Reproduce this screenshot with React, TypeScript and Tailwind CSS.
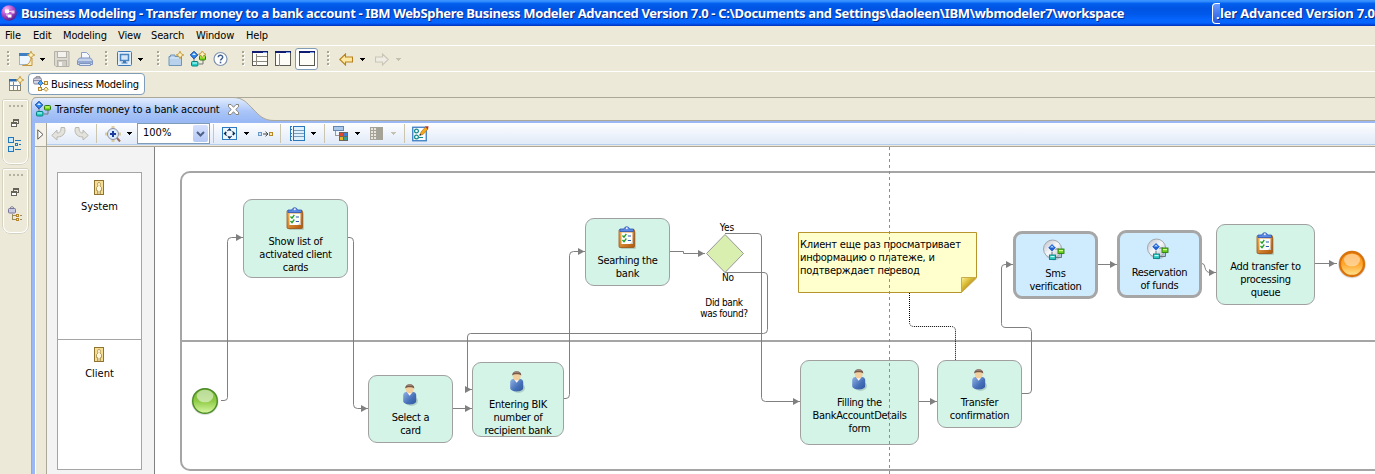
import React from "react";

type P = { className?: string };

const Svg = ({ w = 16, h = 16, className = "", children }: { w?: number; h?: number; className?: string; children: React.ReactNode }) => (
  <svg width={w} height={h} viewBox={`0 0 ${w} ${h}`} fill="none" className={`shrink-0 ${className}`}>
    {children}
  </svg>
);

/* ---------- small glyphs ---------- */

const Sparkle = ({ x = 12, y = 4 }: { x?: number; y?: number }) => (
  <g transform={`translate(${x} ${y})`}>
    <path d="M0-3.800 L1.200-1.200 L3.800 0 L1.200 1.200 L0 3.800 L-1.200 1.200 L-3.800 0 L-1.200-1.200Z" fill="#fdf3c0" stroke="#c4963a" strokeWidth=".9" />
  </g>
);

const Down = ({ className = "", dim = false }: P & { dim?: boolean }) => (
  <Svg w={5} h={3} className={className}>
    <path d="M0 0H5V1H4V2H3V3H2V2H1V1H0Z" fill={dim ? "#c4c1b0" : "#000"} shapeRendering="crispEdges" />
  </Svg>
);

const Grip = ({ className = "" }: P) => (
  <Svg w={3} h={16} className={className}>
    {[0, 4, 8, 12].map((y) => (
      <g key={y} shapeRendering="crispEdges">
        <rect x="1" y={y + 1} width="2" height="2" fill="#fff" />
        <rect x="0" y={y} width="2" height="2" fill="#a9a592" />
      </g>
    ))}
  </Svg>
);

const IconNew = ({ className = "" }: P) => (
  <Svg className={className}>
    <rect x="0.5" y="2.500" width="12" height="11" fill="#eef6ff" stroke="#9fb6cc" />
    <path d="M0 2h10v3H0z" fill="#3f7fc4" />
    <path d="M13 7v7.500H3.500C9 14.500 10.500 12 11.500 9z" fill="#fdeebb" stroke="#c4963a" />
    <Sparkle x={12} y={4} />
  </Svg>
);

const IconSave = ({ className = "" }: P) => (
  <Svg className={className}>
    <path d="M1 .5h14v15H2L.5 14V.5z" fill="#dcdad0" stroke="#b3b1a8" />
    <rect x="3.500" y=".5" width="9" height="6" fill="#f3f2ee" stroke="#b3b1a8" />
    <rect x="3.500" y="9.500" width="9" height="6" fill="#cfcdc5" stroke="#b3b1a8" />
    <rect x="5" y="11" width="3" height="4" fill="#f3f2ee" />
  </Svg>
);

const IconPrint = ({ className = "" }: P) => (
  <Svg className={className}>
    <path d="M4.500 8V1.500h5l3 3V8" fill="#f4f8ff" stroke="#8a9fc4" />
    <path d="M.5 9.500l2-2.500h11l2 2.500v4h-15z" fill="#c3d1ea" stroke="#7f95c0" />
    <path d="M1 10h14v2H1z" fill="#93a9d1" />
    <path d="M2.500 12.500h11v2h-11z" fill="#dce6f6" stroke="#7f95c0" />
  </Svg>
);

const IconMonitor = ({ className = "" }: P) => (
  <Svg className={className}>
    <rect x=".5" y=".5" width="14" height="14" rx="1" fill="#e3effb" stroke="#3d78b8" />
    <rect x="3.500" y="3.500" width="8" height="6" fill="#d4e6f8" stroke="#4a83bd" strokeWidth="1.500" />
    <path d="M6 10h3v1.500h1.500v1h-6v-1H6z" fill="#3d78b8" />
  </Svg>
);

const IconFolderNew = ({ className = "" }: P) => (
  <Svg className={className}>
    <path d="M1 14.500V5.500H2.500V4h4.500v1.500h6.500v9z" fill="#b9d2ec" stroke="#6f94b8" />
    <path d="M2 7h11" stroke="#dcebf9" />
    <Sparkle x={12} y={4} />
  </Svg>
);

const IconProcess = ({ className = "", star = false }: P & { star?: boolean }) => (
  <Svg className={className}>
    <path d="M4 6v5M9 13h4V8" stroke="#777" />
    <path d="M4 .3L7.700 4 4 7.700.3 4z" fill="#2f8df2" stroke="#123c9a" />
    <path d="M4 2l2 2H2z" fill="#d7efff" />
    <rect x="9.500" y="4.500" width="6" height="4.500" rx="1" fill="#7ddd1c" stroke="#2e7d0c" />
    <rect x="10.500" y="5.500" width="4" height="1" fill="#dcff90" />
    <rect x="1.500" y="10.500" width="6.500" height="4.500" rx="1" fill="#25cfc7" stroke="#08807c" />
    <rect x="2.500" y="11.500" width="4.500" height="1" fill="#c7fffb" />
    {star && <Sparkle x={12.300} y={3.300} />}
  </Svg>
);

const IconHelp = ({ className = "" }: P) => (
  <Svg className={className}>
    <circle cx="7.500" cy="8" r="6.500" fill="#fff" stroke="#7f93b0" strokeWidth="1.200" />
    <path d="M5.300 6.300C5.300 3.600 9.700 3.600 9.700 6.200C9.700 7.800 7.500 7.800 7.500 9.600" stroke="#3f5f90" strokeWidth="1.500" />
    <rect x="6.700" y="10.700" width="1.600" height="1.600" fill="#3f5f90" />
  </Svg>
);

const IconLayout = ({ kind, className = "" }: P & { kind: number }) => (
  <Svg className={className}>
    <g shapeRendering="crispEdges">
      <rect x=".5" y=".5" width="15" height="14" fill="#fdfcf6" stroke="#5b5a52" />
      <rect x="0" y="0" width="16" height="2" fill="#101c70" />
      <rect x="11" y="1" width="4" height="1" fill="#7fa5e8" />
      {kind < 2 && <path d="M4.500 3v12" stroke="#8d8b80" />}
      {kind === 0 && <path d="M1 10.500h14M5 5.500h10" stroke="#8d8b80" />}
    </g>
  </Svg>
);

const IconArrow = ({ className = "", dim = false, flip = false }: P & { dim?: boolean; flip?: boolean }) => (
  <Svg w={14} h={13} className={`${flip ? "-scale-x-100" : ""} ${className}`}>
    <path d="M.8 6.500L6.500 1v3h7v5h-7v3z" fill={dim ? "#efede3" : "#fde8a4"} stroke={dim ? "#c9c6b8" : "#b9811d"} strokeWidth="1.100" />
  </Svg>
);

const IconPerspective = ({ className = "" }: P) => (
  <Svg className={className}>
    <rect x="1.500" y="3.500" width="11" height="11" fill="#fbfcf6" stroke="#8a8468" />
    <path d="M1 3h8v2.500H1z" fill="#2c6cb0" />
    <path d="M2 9.500h11M5.500 6v8M9.500 10v4" stroke="#6e8aa5" />
    <Sparkle x={12} y={4} />
  </Svg>
);

const IconBusiness = ({ className = "" }: P) => (
  <Svg className={className}>
    <path d="M3 2V.8h4V2" stroke="#777" />
    <rect x=".5" y="2" width="8" height="6" rx="1.500" fill="#d4d4e4" stroke="#84849a" />
    <path d="M1 4.500h7" stroke="#8d8da8" />
    <path d="M7.500 7.500v5.500M7.500 7.500h5M7.500 13.500h4" stroke="#888" />
    <path d="M7.500 4.500l2.500 2.500-2.500 2.500L5 7z" fill="#4aa6f6" stroke="#2760a8" strokeWidth=".8" />
    <rect x="11.500" y="5.500" width="3" height="3" fill="#fff0b0" stroke="#b8862a" />
    <rect x="5.500" y="11.500" width="3" height="3" fill="#fff0b0" stroke="#b8862a" />
    <path d="M13 11l2.200 2.200L13 15.400l-2.200-2.200z" fill="#fff0b0" stroke="#b8862a" strokeWidth=".9" />
  </Svg>
);

const IconClose = ({ className = "" }: P) => (
  <Svg w={11} h={11} className={className}>
    <path d="M.5.5h2.500l2.500 2.800L8 .5h2.500V2.800L7.700 5.500l2.800 2.700v2.300H8L5.500 7.700 3 10.500H.5V8.200l2.800-2.700L.5 2.800z" fill="#fff" stroke="#7d7b70" strokeWidth=".9" />
  </Svg>
);

const IconUndo = ({ className = "", flip = false }: P & { flip?: boolean }) => (
  <Svg w={15} h={15} className={`${flip ? "-scale-x-100" : ""} ${className}`}>
    <path d="M.8 9.500L6 4v3C8.500 7 10 6 10 1.500H13.500C15 6 13 11 6 11v3z" fill="#e3e2dc" stroke="#bbb9ae" />
  </Svg>
);

const IconZoom = ({ className = "" }: P) => (
  <Svg className={className}>
    <path d="M11.500 11.500l3.500 4" stroke="#9a6e5e" strokeWidth="2" />
    <circle cx="8" cy="8" r="5.500" fill="#dcecff" stroke="#8f9099" />
    <path d="M8 5v6M5 8h6" stroke="#1d3d9e" strokeWidth="2" />
    <path d="M1 6.500v3M15 6.500v3M6.500 1h3M6.500 15h3" stroke="#c9a54c" />
  </Svg>
);

const IconFit = ({ className = "" }: P) => (
  <Svg w={16} h={14} className={className}>
    <rect x=".5" y=".5" width="14" height="12" fill="#eef7ff" stroke="#2d7ac0" />
    <circle cx="7.500" cy="6.500" r="3.500" stroke="#0c2f52" strokeDasharray="1.500 1.200" />
    <path d="M7.500 1l2.200 2.500H5.300zM7.500 12l2.200-2.500H5.300zM1.500 6.500L4 4.300v4.400zM13.500 6.500L11 4.300v4.400z" fill="#0c2f52" />
  </Svg>
);

const IconChain = ({ className = "" }: P) => (
  <Svg w={16} h={8} className={className}>
    <rect x=".5" y="2.500" width="3" height="3" fill="#c9e4ff" stroke="#6b97c2" />
    <path d="M5 4h5M7.500 1.700L10 4 7.500 6.300" stroke="#444" />
    <rect x="11.500" y="2.500" width="3" height="3" fill="#ffedb0" stroke="#b8862a" />
  </Svg>
);

const IconList = ({ className = "" }: P) => (
  <Svg w={16} h={15} className={className}>
    <g shapeRendering="crispEdges">
      <path d="M.5 0v15M1 .5h1M1 3.500h1M1 7.500h1M1 10.500h1M1 14.500h1" stroke="#2b77bc" />
      <rect x="3.500" y=".5" width="11" height="14" fill="#dff0fd" stroke="#2b77bc" />
      <path d="M4 4.500h10M4 7.500h10M4 10.500h10" stroke="#7a9cb7" />
    </g>
  </Svg>
);

const IconColors = ({ className = "" }: P) => (
  <Svg className={className}>
    <g shapeRendering="crispEdges">
      <rect x=".5" y=".5" width="10" height="4" fill="#a9c8ea" stroke="#6387b0" />
      <path d="M2.500 5v4h3" stroke="#999" />
      <rect x="6" y="6" width="9" height="9" fill="#6a665a" />
      <rect x="7" y="7" width="3" height="3" fill="#e0482b" />
      <rect x="11" y="7" width="3" height="3" fill="#3b7fd6" />
      <rect x="7" y="11" width="3" height="3" fill="#e8b526" />
      <rect x="11" y="11" width="3" height="3" fill="#35a09a" />
    </g>
  </Svg>
);

const IconGrid = ({ className = "" }: P) => (
  <Svg w={13} h={13} className={className}>
    <g shapeRendering="crispEdges">
      <rect width="13" height="13" fill="#a5a398" />
      {[1, 4, 7, 10].map((y) => (
        <g key={y} fill="#e8e6dc">
          <rect x="1" y={y} width="2" height="2" />
          <rect x="4" y={y} width="2" height="2" />
        </g>
      ))}
    </g>
  </Svg>
);

const IconEdit = ({ className = "" }: P) => (
  <Svg w={17} h={16} className={className}>
    <rect x=".75" y="1.250" width="13.500" height="13.500" fill="#f8fcff" stroke="#3b7cc4" strokeWidth="1.300" />
    <circle cx="4.500" cy="5" r="1.900" stroke="#0d8a8a" strokeWidth="1.200" />
    <circle cx="4.500" cy="11" r="1.900" stroke="#0d8a8a" strokeWidth="1.200" />
    <path d="M7 11.500h4" stroke="#0d8a8a" />
    <path d="M8 9l1-3L13.500 1l2.500 2-5 5.500z" fill="#f6a81a" stroke="#a86a08" strokeWidth=".6" />
    <path d="M13 .5l3.500-.3-.5 3.300z" fill="#c22d1c" />
    <path d="M7.300 9.700l.7-2 1.500 1.300z" fill="#222" />
  </Svg>
);

const IconRestore = ({ className = "" }: P) => (
  <Svg w={8} h={8} className={className}>
    <g shapeRendering="crispEdges" stroke="#66645a">
      <path d="M2.500 3V.5h5v4H6M2 1.500h6" />
      <rect x=".5" y="3.500" width="5" height="4" fill="#fff" />
      <path d="M0 4.500h6" />
    </g>
  </Svg>
);

const IconOutline = ({ className = "" }: P) => (
  <Svg w={14} h={16} className={className}>
    <g shapeRendering="crispEdges" stroke="#2377bb">
      <rect x=".5" y=".5" width="5" height="5" fill="#c9e9ff" />
      <path d="M7 3.500h6M11 7.500h2M7 12.500h6" />
      <rect x="7.500" y="6.500" width="2" height="2" fill="#c9e9ff" />
      <rect x=".5" y="9.500" width="5" height="5" fill="#c9e9ff" />
    </g>
  </Svg>
);

const IconTree = ({ className = "" }: P) => (
  <Svg w={15} h={16} className={className}>
    <path d="M2 3C2 0 6 0 6 3" stroke="#777792" />
    <rect x=".5" y="2.500" width="7" height="4.500" rx="1" fill="#c9c9e2" stroke="#77779c" />
    <path d="M4.500 8v6M4.500 9.500H8M4.500 13.500H8M12 9.500h2M12 13.500h2" stroke="#9a8a60" />
    <rect x="8.500" y="8.500" width="2" height="2" fill="#fff0b0" stroke="#b8862a" />
    <rect x="8.500" y="12.500" width="2" height="2" fill="#fff0b0" stroke="#b8862a" />
  </Svg>
);

const IconRole = ({ className = "" }: P) => (
  <Svg w={10} h={15} className={className}>
    <rect x=".5" y=".5" width="9" height="14" fill="#f7dd94" stroke="#8f7430" />
    <path d="M3.500 14V10.500H2.500V7.500L4 6C3 3.500 3.800 2.500 5 2.500S7 3.500 6 6l1.500 1.500v3H6.500V14M5 11V14" fill="#fff7dc" stroke="#a58a45" strokeWidth=".8" />
  </Svg>
);

const AppLogo = ({ className = "" }: P) => (
  <Svg className={className}>
    <defs>
      <radialGradient id="logo" cx=".35" cy=".25" r=".8">
        <stop offset="0" stopColor="#f6b4f4" />
        <stop offset=".5" stopColor="#b14fcd" />
        <stop offset="1" stopColor="#4c1c86" />
      </radialGradient>
    </defs>
    <circle cx="8" cy="8" r="7.800" fill="url(#logo)" />
    <path d="M6 7v4h3M7 6.500h4" stroke="#f0d8f6" strokeWidth="1" />
    <rect x="4" y="4.500" width="4" height="3.500" fill="#fff" />
    <rect x="10.500" y="5.500" width="3" height="3" fill="#eac6f0" />
    <rect x="7" y="9.500" width="3.500" height="3" fill="#fff" />
  </Svg>
);

/* ---------- node pictures ---------- */

const Clipboard = () => (
  <Svg w={20} h={24}>
    <rect x="2.500" y="5" width="15.500" height="18" rx="1.500" fill="#9db3a9" opacity=".6" />
    <rect x="1" y="3.500" width="15.500" height="18" rx="1" fill="url(#board)" stroke="#9a5514" strokeWidth=".8" />
    <rect x="3.500" y="6.500" width="11" height="11.500" fill="#fdfefe" />
    <path d="M12 18l2.500-2.500v2.500z" fill="#c8cdd2" />
    <path d="M2 5.500V3h4C6.500 0 11 0 11.500 3h4v2.500z" fill="#5a8ae6" stroke="#2c57b2" strokeWidth=".8" />
    <circle cx="8.800" cy="2.300" r="1" fill="#e8eefc" />
    <path d="M4.500 9.500l1.500 1.700L8.300 8M4.500 14l1.500 1.700 2.300-3.200" stroke="#1fa01f" strokeWidth="1.300" />
    <path d="M9.800 10h3.200M9.800 14.500h3.200" stroke="#2b5fae" strokeWidth="1.100" />
  </Svg>
);

const Person = () => (
  <Svg w={20} h={24}>
    <ellipse cx="10.500" cy="18" rx="6.500" ry="5" fill="#7d9a96" opacity=".4" />
    <path d="M2.200 12C2.200 9.500 5 8.500 8.700 8.500S15.200 9.500 15.200 12V18C15.200 22.500 2.200 22.500 2.200 18z" fill="url(#suit)" />
    <path d="M6 9.300L8.700 12.700l2.700-3.400z" fill="#fff" />
    <ellipse cx="8.700" cy="6" rx="4" ry="4.500" fill="#f4cf9e" />
    <path d="M4.200 5.500C3.500-.3 14-.3 13.200 5.500C11.700 3.800 5.700 3.800 4.200 5.500z" fill="#76594d" />
    <path d="M5.300 2.300C6.800.8 10.700.8 12.200 2.300C10.200 3 7.300 3 5.300 2.300z" fill="#a08a80" />
  </Svg>
);

const Disc = () => (
  <Svg w={24} h={24} className="-ml-[3px]">
    <ellipse cx="12" cy="12.500" rx="9" ry="9" fill="#8ba0b0" opacity=".5" />
    <circle cx="10.500" cy="10" r="9" fill="url(#disc)" stroke="#a3a7ad" />
    <path d="M10 10v8M13 18.500h6.500V14M12 10h5" stroke="#6d757e" />
    <path d="M10 4.500L14.200 8.700 10 12.900 5.800 8.700z" fill="#2060d0" stroke="#fff" strokeWidth=".8" />
    <path d="M10 6.500l2 2H8z" fill="#b6dcff" />
    <rect x="16" y="10" width="6" height="4.500" fill="#67cc1c" stroke="#2e8210" strokeWidth=".9" />
    <rect x="17" y="11" width="4" height="1.200" fill="#d0ff88" />
    <rect x="7.500" y="16" width="6" height="4.500" fill="#2cc6c2" stroke="#0b827f" strokeWidth=".9" />
    <rect x="8.500" y="17" width="4" height="1.200" fill="#befaf6" />
  </Svg>
);

const pictures = { task: Clipboard, human: Person, service: Disc };

type Node = { x: number; y: number; w: number; h: number; kind: keyof typeof pictures; lines: string[] };

const nodes: Node[] = [
  { x: 88, y: 52, w: 105, h: 79, kind: "task", lines: ["Show list of", "activated client", "cards"] },
  { x: 213, y: 228, w: 85, h: 68, kind: "human", lines: ["Select a", "card"] },
  { x: 317, y: 215, w: 92, h: 75, kind: "human", lines: ["Entering BIK", "number of", "recipient bank"] },
  { x: 430, y: 71, w: 85, h: 68, kind: "task", lines: ["Searhing the", "bank"] },
  { x: 645, y: 213, w: 119, h: 85, kind: "human", lines: ["Filling the", "BankAccountDetails", "form"] },
  { x: 782, y: 213, w: 85, h: 68, kind: "human", lines: ["Transfer", "confirmation"] },
  { x: 858, y: 84, w: 85, h: 68, kind: "service", lines: ["Sms", "verification"] },
  { x: 962, y: 83, w: 85, h: 68, kind: "service", lines: ["Reservation", "of funds"] },
  { x: 1061, y: 77, w: 99, h: 81, kind: "task", lines: ["Add transfer to", "processing", "queue"] },
];

const ActivityNode = ({ n }: { n: Node }) => {
  const Picture = pictures[n.kind];
  const skin = n.kind === "service" ? "border-[3px] border-[#a6a6a6] bg-[#cfecff] pt-[5px]" : "border border-[#a0a0a0] bg-[#d4f4e8] pt-[7px]";
  return (
    <div className={`absolute flex flex-col items-center rounded-[9px] ${skin}`} style={{ left: n.x, top: n.y, width: n.w, height: n.h }}>
      <Picture />
      <div className="mt-[4px] text-center leading-[13px] tracking-[-0.27px] whitespace-nowrap">
        {n.lines.map((l) => (
          <div key={l}>{l}</div>
        ))}
      </div>
    </div>
  );
};

const links = [
  "M221 400.500H224Q227.500 400.500 227.500 397.500V241.500Q227.500 237.500 231.500 237.500H243",
  "M348 237.500H350Q353.500 237.500 353.500 241.500V404.500Q353.500 408.500 357.500 408.500H368",
  "M453 408.500H472",
  "M564 398.500H566Q569.500 398.500 569.500 394.500V255.500Q569.500 251.500 573.500 251.500H585",
  "M670 251.500H683.500V253.500H705",
  "M725 233.500H758Q761.500 233.500 761.500 237V397.500Q761.500 401.500 765.500 401.500H800",
  "M725 272.500H764Q767.500 272.500 767.500 276V329.500Q767.500 333.500 763.500 333.500H470.500Q467.500 333.500 467.500 337V389.500H472",
  "M919 401.500H937",
  "M1022 393.500H1028Q1031.500 393.500 1031.500 390V331.500Q1031.500 327.500 1027.500 327.500H1006Q1001.500 327.500 1001.500 323.500V268Q1001.500 264.500 1005 264.500H1013",
  "M1098 264.500H1117",
  "M1202 263.500Q1204.500 263.500 1205 267.500Q1206 272.500 1210 272.500H1216",
  "M1315 263.500H1337",
];

const heads: [number, number][] = [
  [243, 237.5], [368, 408.5], [472, 408.5], [585, 251.5], [705, 253.5], [800, 401.5],
  [472, 389.5], [937, 401.5], [1013, 264.5], [1117, 264.5], [1216, 272.5], [1336, 263.5],
];

const Canvas = () => (
  <div className="relative min-w-0 flex-1 overflow-hidden bg-white">
    <svg width="1220" height="327" viewBox="155 147 1220 327" fill="none" className="absolute top-0 left-0">
      <defs>
        <linearGradient id="board" x1="0" y1="0" x2="1" y2="1">
          <stop offset="0" stopColor="#f7b65c" />
          <stop offset="1" stopColor="#b0560a" />
        </linearGradient>
        <linearGradient id="suit" x1="0" y1="0" x2="1" y2="1">
          <stop offset="0" stopColor="#93b4e6" />
          <stop offset=".6" stopColor="#4570b8" />
          <stop offset="1" stopColor="#3058a0" />
        </linearGradient>
        <linearGradient id="disc" x1="0" y1="0" x2="1" y2="1">
          <stop offset="0" stopColor="#b9bdc4" />
          <stop offset=".5" stopColor="#f6f7f9" />
          <stop offset="1" stopColor="#b4b9c2" />
        </linearGradient>
        <linearGradient id="green" x1="0" y1="0" x2="0" y2="1">
          <stop offset="0" stopColor="#6eb52a" />
          <stop offset=".5" stopColor="#8fcb46" />
          <stop offset="1" stopColor="#d9f9a6" />
        </linearGradient>
        <linearGradient id="orange" x1="0" y1="0" x2="0" y2="1">
          <stop offset="0" stopColor="#ff9410" />
          <stop offset=".5" stopColor="#ffa62c" />
          <stop offset="1" stopColor="#ffe896" />
        </linearGradient>
        <linearGradient id="fold" x1="0" y1="0" x2="1" y2="1">
          <stop offset="0" stopColor="#fbf3a8" />
          <stop offset=".3" stopColor="#e0c43c" />
          <stop offset=".6" stopColor="#b98e22" />
        </linearGradient>
      </defs>

      <rect x="181" y="172" width="1300" height="298" rx="9" stroke="#a5a5a5" strokeWidth="2" />
      <path d="M181 341H1375" stroke="#a5a5a5" strokeWidth="2" />

      <g stroke="#808080">
        {links.map((d) => (
          <path key={d} d={d} />
        ))}
      </g>
      {heads.map(([x, y]) => (
        <path key={`${x}-${y}`} d={`M${x - 7} ${y - 3.5}L${x - 0.5} ${y}L${x - 7} ${y + 3.5}Z`} fill="#808080" />
      ))}
      <path d="M909.500 293V322Q909.500 326.500 914 326.500H951Q955.500 326.500 955.500 331V360" stroke="#000" strokeDasharray="1 1" />

      <path d="M725 234.500L743.500 253.500 725 272.500 706.500 253.500Z" fill="#d8efb0" stroke="#979797" />

      <path d="M798.500 232.500H976.500V278L961.500 292.500H798.500Z" fill="#ffffce" stroke="#b8952c" />
      <path d="M961.500 292.500V277.500H976.500Z" fill="url(#fold)" stroke="#c9ab4a" />

      <circle cx="205" cy="401.500" r="13.500" fill="#999" opacity=".35" />
      <circle cx="205" cy="401" r="12.300" fill="url(#green)" stroke="#4d8c26" strokeWidth="1.400" />
      <ellipse cx="205" cy="396" rx="8.300" ry="6.300" fill="#fff" opacity=".5" />

      <circle cx="1352" cy="264.500" r="13.800" fill="#999" opacity=".35" />
      <circle cx="1352" cy="264" r="12" fill="url(#orange)" stroke="#d9720a" strokeWidth="2.300" />
      <ellipse cx="1352" cy="260" rx="8" ry="6.300" fill="#fff" opacity=".45" />
    </svg>

    {nodes.map((n) => (
      <ActivityNode key={n.lines.join(" ")} n={n} />
    ))}

    <div className="absolute top-[75px] left-[552px] w-10 text-center text-[10px] leading-[12px]">Yes</div>
    <div className="absolute top-[125px] left-[553px] w-10 text-center text-[10px] leading-[12px]">No</div>
    <div className="absolute top-[150px] left-[529px] w-20 text-center text-[10px] leading-[11px] tracking-[-0.35px]">
      Did bank
      <br />
      was found?
    </div>
    <div className="absolute top-[91px] left-[645px] leading-[13px] tracking-[-0.21px] whitespace-nowrap">
      Клиент еще раз просматривает
      <br />
      информацию о платеже, и
      <br />
      подтверждает перевод
    </div>

    <svg width="1" height="327" className="absolute top-0 left-[734px]">
      <path d="M.5 0V327" stroke="#8080ff" strokeDasharray="3 3" />
    </svg>
  </div>
);

const Sep = ({ className = "" }: P) => <div className={`h-[19px] w-px shrink-0 bg-[#cbc6b0] ${className}`} />;

const Tray = ({ children }: { children: React.ReactNode }) => (
  <div className="flex h-[66px] w-[27px] flex-col items-center rounded-t-[2px] rounded-b-[8px] border-2 border-white bg-[#ece9d8] outline -outline-offset-1 outline-[#d6d2c0]">
    <div className="mt-[4px] flex gap-[2px]">
      <i className="size-[2px] bg-[#b5b1a0]" />
      <i className="size-[2px] bg-[#b5b1a0]" />
      <i className="size-[2px] bg-[#b5b1a0]" />
      <i className="size-[2px] bg-[#b5b1a0]" />
    </div>
    {children}
  </div>
);

const Lane = ({ name, className }: { name: string; className: string }) => (
  <div className={`flex flex-col items-center border border-[#a5a5a5] bg-white ${className}`}>
    <IconRole className="mt-[7px] -ml-[2px]" />
    <div className="mt-[5px] leading-[13px]">{name}</div>
  </div>
);

const menus = [
  ["File", "w-[28px]"],
  ["Edit", "w-[30px]"],
  ["Modeling", "w-[55px]"],
  ["View", "w-[33px]"],
  ["Search", "w-[45px]"],
  ["Window", "w-[50px]"],
  ["Help", "w-[30px]"],
];

export default function App() {
  return (
    <div className="flex h-[474px] w-[1375px] flex-col overflow-hidden bg-[#ece9d8] font-['DejaVu_Sans_Condensed','DejaVu_Sans',sans-serif] text-[11px] text-black [font-stretch:condensed]">
      <header className="flex h-[26px] shrink-0 items-center bg-[linear-gradient(180deg,#3d95ff_0,#2a88fb_2px,#0562f0_3px,#0054e3_8px,#0058ea_14px,#0566ff_20px,#0565fc_23px,#003dd6_25px,#0036b0_26px)] font-['Noto_Sans',sans-serif] text-[13px] font-bold text-white [text-shadow:1px_1px_0_#0a2a86]">
        <AppLogo className="ml-[1px]" />
        <div className="ml-[4px] w-[1191px] pt-[2px] tracking-[-0.35px] whitespace-nowrap">
          Business Modeling - Transfer money to a bank account - IBM WebSphere Business Modeler Advanced Version 7.0 - C:\Documents and Settings\daoleen\IBM\wbmodeler7\workspace
        </div>
        <div className="h-[21px] w-[8px] shrink-0 rounded-l-[4px] border border-r-0 border-white bg-[linear-gradient(180deg,#6b9bff,#2a58dc)] pl-[3px] leading-[21px]">.</div>
        <div className="pt-[2px] tracking-[-0.15px] whitespace-nowrap">ler Advanced Version 7.0</div>
      </header>

      <nav className="flex h-[20px] shrink-0 items-center border-b border-white pt-[2px] pl-[5px]">
        {menus.map(([m, w]) => (
          <div key={m} className={`shrink-0 tracking-[-0.15px] whitespace-nowrap ${w}`}>
            {m}
          </div>
        ))}
      </nav>

      <div className="flex h-[26px] shrink-0 items-center border-b border-white pt-px">
        <Grip className="ml-[7px]" />
        <IconNew className="ml-[9px]" />
        <Down className="ml-[5px]" />
        <IconSave className="ml-[9px]" />
        <IconPrint className="ml-[7px]" />
        <Grip className="ml-[12px]" />
        <IconMonitor className="ml-[9px]" />
        <Down className="ml-[5px]" />
        <Grip className="ml-[14px]" />
        <IconFolderNew className="ml-[8px]" />
        <IconProcess star className="ml-[6px]" />
        <IconHelp className="ml-[7px]" />
        <Grip className="ml-[13px]" />
        <IconLayout kind={0} className="ml-[7px]" />
        <IconLayout kind={1} className="ml-[7px]" />
        <div className="ml-[4px] flex h-[22px] w-[23px] shrink-0 items-center justify-center rounded-[3px] border border-[#7f9db9] bg-white">
          <IconLayout kind={2} />
        </div>
        <Grip className="ml-[9px]" />
        <IconArrow className="ml-[9px]" />
        <Down className="ml-[7px]" />
        <IconArrow dim flip className="ml-[10px]" />
        <Down dim className="ml-[7px]" />
      </div>

      <div className="flex min-h-0 flex-1">
        <aside className="flex w-[31px] shrink-0 flex-col">
          <div className="flex h-[25px] items-center pb-px pl-[8px]">
            <IconPerspective />
          </div>
          <div className="flex flex-col gap-[3px] pt-[2px] pl-[2px]">
            <Tray>
              <IconRestore className="mt-[12px] -ml-px" />
              <IconOutline className="mt-[10px] -ml-px" />
            </Tray>
            <Tray>
              <IconRestore className="mt-[12px] -ml-px" />
              <IconTree className="mt-[10px] -ml-px" />
            </Tray>
          </div>
        </aside>

        <main className="flex min-w-0 flex-1 flex-col">
          <div className="-ml-[3px] flex h-[25px] shrink-0 items-start pt-[1px]">
            <div className="flex h-[22px] w-[117px] items-center rounded-[4px] border border-[#7f9db9] bg-white pl-[4px]">
              <IconBusiness />
              <span className="ml-[2px] pt-[2px] tracking-[-0.24px] whitespace-nowrap">Business Modeling</span>
            </div>
          </div>

          <div className="relative flex h-[24px] shrink-0 items-center border-t border-b border-[#aca899]">
            <svg width="245" height="24" viewBox="0 0 245 24" className="absolute -top-px left-0">
              <defs>
                <linearGradient id="tab" x1="0" y1="0" x2="0" y2="1">
                  <stop offset="0" stopColor="#e4eefe" />
                  <stop offset=".6" stopColor="#a9c5f8" />
                  <stop offset="1" stopColor="#99b8f4" />
                </linearGradient>
              </defs>
              <path d="M.5 24V6Q1 .5 6 .5H202C212 .5 216 6 222 12S232 23.500 243 23.500V24Z" fill="url(#tab)" />
              <path d="M.5 24V6Q1 .5 6 .5H202C212 .5 216 6 222 12S232 23.500 243 23.500" fill="none" stroke="#aca899" />
              <path d="M0 0H4Q.5 1 0 5Z" fill="#ece9d8" />
            </svg>
            <div className="relative flex items-center pl-[4px]">
              <IconProcess />
              <span className="ml-[4px] w-[165px] pt-[2px] tracking-[-0.14px] whitespace-nowrap">Transfer money to a bank account</span>
              <IconClose className="ml-[8px]" />
            </div>
          </div>

          <div className="flex min-h-0 flex-1 border-l border-[#aca899]">
            <div className="w-[3px] shrink-0 bg-[#99b8f4]" />
            <div className="flex min-w-0 flex-1 flex-col border-t-2 border-[#99b8f4]">
              <div className="flex h-[24px] shrink-0">
                <div className="flex w-[12px] shrink-0 items-center justify-center border-r border-b border-[#aca899] bg-[#f4f2e8]">
                  <Svg w={7} h={11}>
                    <path d="M.8.8V10.200L6 5.500z" fill="#fff" stroke="#5c5a50" />
                  </Svg>
                </div>
                <div className="flex min-w-0 flex-1 flex-col border-b border-[#aca899]">
                  <div className="flex h-[22px] shrink-0 items-center border-b border-[#b5cdf0] bg-[linear-gradient(180deg,#fdfeff,#e1eaf8)]">
                    <IconUndo className="ml-[4px]" />
                    <IconUndo flip className="ml-[8px]" />
                    <Sep className="ml-[7px]" />
                    <IconZoom className="ml-[8px]" />
                    <Down className="ml-[6px]" />
                    <div className="ml-[5px] flex h-[21px] w-[73px] shrink-0 items-center justify-between border border-[#7f9db9] bg-white pr-[1px] pl-[5px]">
                      <span>100%</span>
                      <div className="flex h-[17px] w-[15px] items-center justify-center rounded-[2px] bg-[linear-gradient(180deg,#d5e0fd,#b5c9f6)]">
                        <Svg w={9} h={6}>
                          <path d="M1 1l3.500 3.500L8 1" stroke="#4d6185" strokeWidth="2" />
                        </Svg>
                      </div>
                    </div>
                    <Sep className="ml-[3px]" />
                    <IconFit className="ml-[8px]" />
                    <Down className="ml-[6px]" />
                    <IconChain className="ml-[9px]" />
                    <Sep className="ml-[6px]" />
                    <IconList className="ml-[9px]" />
                    <Down className="ml-[5px]" />
                    <Sep className="ml-[8px]" />
                    <IconColors className="ml-[8px]" />
                    <Down className="ml-[6px]" />
                    <IconGrid className="ml-[10px]" />
                    <Down dim className="ml-[8px]" />
                    <Sep className="ml-[8px]" />
                    <IconEdit className="ml-[7px]" />
                  </div>
                </div>
              </div>

              <div className="flex min-h-0 flex-1">
                <div className="w-[12px] shrink-0 border-r border-l border-r-[#aca899] border-l-white bg-[#ece9d8]" />
                <div className="flex w-[108px] shrink-0 flex-col border-r border-[#808080] bg-[#f3f3f3] pt-[25px] pl-[10px]">
                  <Lane name="System" className="h-[168px] w-[85px]" />
                  <Lane name="Client" className="-mt-px h-[131px] w-[85px]" />
                </div>
                <Canvas />
              </div>
            </div>
          </div>
        </main>
      </div>
    </div>
  );
}
